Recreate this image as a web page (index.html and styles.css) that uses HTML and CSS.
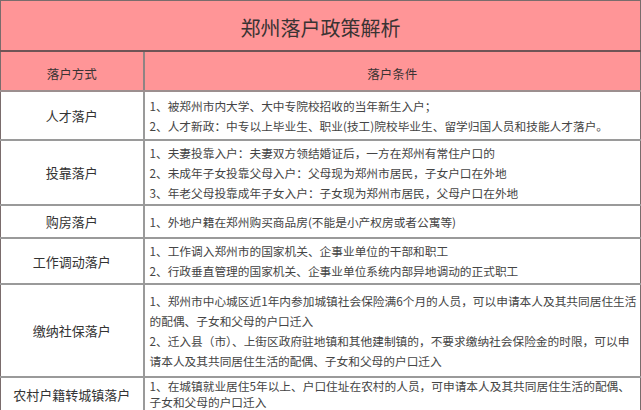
FILE: index.html
```html
<!DOCTYPE html>
<html lang="zh">
<head>
<meta charset="utf-8">
<title>郑州落户政策解析</title>
<link rel="stylesheet" href="styles.css">
</head>
<body>
<table class="policy">
  <colgroup><col class="c-type"><col class="c-cond"></colgroup>
  <thead>
    <tr class="title-row"><th colspan="2">郑州落户政策解析</th></tr>
    <tr class="head-row"><th class="col-type">落户方式</th><th>落户条件</th></tr>
  </thead>
  <tbody>
    <tr class="r-talent">
      <td class="type">人才落户</td>
      <td class="cond">1、被郑州市内大学、大中专院校招收的当年新生入户；<br>2、人才新政：中专以上毕业生、职业(技工)院校毕业生、留学归国人员和技能人才落户。</td>
    </tr>
    <tr class="r-kin">
      <td class="type">投靠落户</td>
      <td class="cond">1、夫妻投靠入户：夫妻双方领结婚证后，一方在郑州有常住户口的<br>2、未成年子女投靠父母入户：父母现为郑州市居民，子女户口在外地<br>3、年老父母投靠成年子女入户：子女现为郑州市居民，父母户口在外地</td>
    </tr>
    <tr class="r-house">
      <td class="type">购房落户</td>
      <td class="cond">1、外地户籍在郑州购买商品房(不能是小产权房或者公寓等)</td>
    </tr>
    <tr class="r-job">
      <td class="type">工作调动落户</td>
      <td class="cond">1、工作调入郑州市的国家机关、企事业单位的干部和职工<br>2、行政垂直管理的国家机关、企事业单位系统内部异地调动的正式职工</td>
    </tr>
    <tr class="r-social">
      <td class="type">缴纳社保落户</td>
      <td class="cond">1、郑州市中心城区近1年内参加城镇社会保险满6个月的人员，可以申请本人及其共同居住生活的配偶、子女和父母的户口迁入<br>2、迁入县（市）、上街区政府驻地镇和其他建制镇的，不要求缴纳社会保险金的时限，可以申请本人及其共同居住生活的配偶、子女和父母的户口迁入</td>
    </tr>
    <tr class="r-rural">
      <td class="type">农村户籍转城镇落户</td>
      <td class="cond">1、在城镇就业居住5年以上、户口住址在农村的人员，可申请本人及其共同居住生活的配偶、子女和父母的户口迁入</td>
    </tr>
  </tbody>
</table>
</body>
</html>
```
FILE: styles.css
```css
html, body {
  margin: 0;
  padding: 0;
  background: #ffffff;
}
body {
  font-family: "Noto Sans CJK SC", "Noto Sans", sans-serif;
  color: #333333;
}
.policy {
  width: 641px;
  border-collapse: collapse;
  table-layout: fixed;
  border: 1px solid #7a6c6c;
}
.c-type { width: 143px; }
.policy th {
  background: #ff9597;
  font-weight: normal;
  color: #3a3333;
  padding: 0;
}
.title-row th {
  height: 45px;
  font-size: 20px;
  padding-top: 4px;
  border-bottom: 2px solid #6f5456;
}
.head-row th {
  height: 33px;
  font-size: 12.5px;
  padding-top: 5px;
  border-bottom: 2px solid #9c8f8f;
}
.col-type {
  border-right: 2px solid #8f8383;
}
.policy td {
  border-top: 2px solid #9a9a9a;
  padding: 0;
  vertical-align: middle;
}
.policy td.type {
  border-right: 2px solid #9a9a9a;
  text-align: center;
  font-size: 13px;
  color: #333;
}
.policy td.cond {
  font-size: 11.7px;
  line-height: 20px;
  color: #444;
  padding-left: 5px;
  padding-right: 0;
}
.r-talent td { height: 47px; }
.r-kin td { height: 63px; }
.r-house td { height: 31px; }
.r-job td { height: 44px; }
.r-social td { height: 91px; }
.r-rural td { height: 29px; }
.r-rural td.cond { line-height: 16px; }
```
